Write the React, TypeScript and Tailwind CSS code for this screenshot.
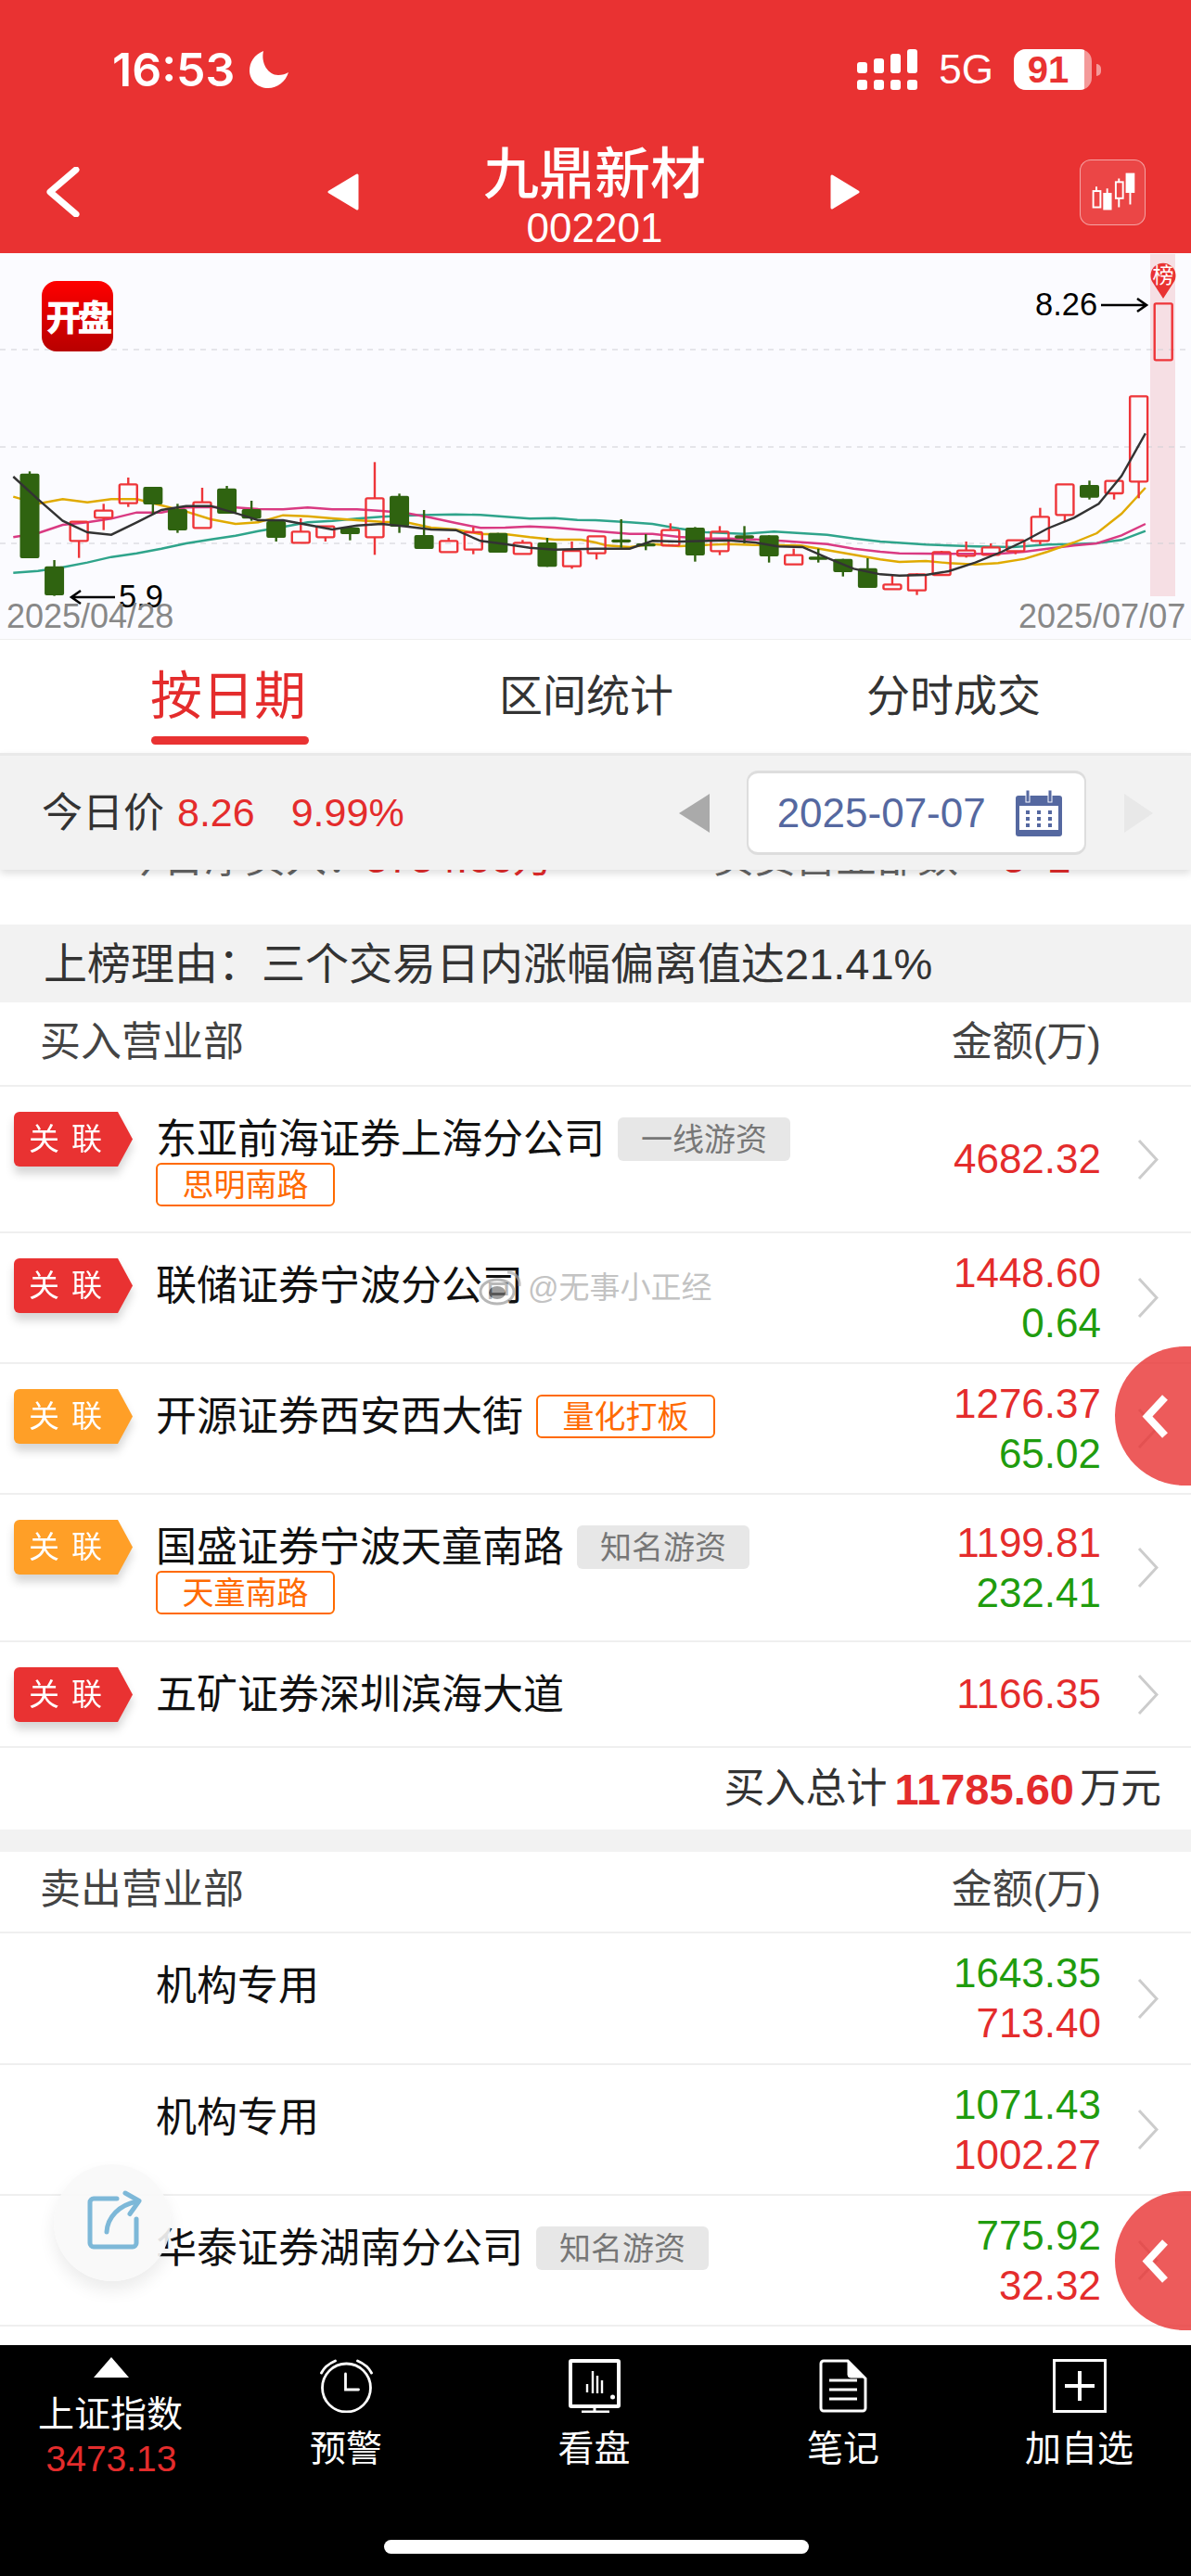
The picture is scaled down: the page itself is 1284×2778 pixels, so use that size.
import React from "react";

type C = [number, number, number, number, number];
// i-order candles: colour (0 green, 1 red), bodyTop, bodyBot, wickTop, wickBot (zoom units)
const candles: C[] = [
  [0,722,996,715,996],[0,1022,1116,1002,1118],[1,878,940,878,995],[1,842,865,820,905],[1,757,818,735,830],
  [0,765,822,765,852],[0,837,906,820,914],[1,815,898,768,898],[0,770,852,762,852],[0,837,868,810,875],
  [0,876,930,876,942],[1,910,946,867,946],[1,893,928,893,942],[0,896,918,896,938],[1,802,928,685,985],
  [0,794,894,787,914],[0,921,966,840,966],[1,940,976,930,976],[1,912,968,895,983],[0,914,978,914,978],
  [1,946,982,937,982],[0,945,1024,930,1024],[1,972,1022,942,1030],[1,925,980,925,1000],[0,935,945,870,962],
  [0,948,958,918,970],[1,905,955,883,955],[0,897,987,895,1007],[1,910,973,892,986],[0,922,932,892,948],
  [0,922,990,922,1010],[1,986,1016,965,1016],[0,991,1001,965,1010],[0,998,1041,998,1055],[0,1028,1092,996,1092],
  [1,1081,1096,1047,1096],[1,1048,1100,1045,1115],[1,976,1050,972,1050],[1,971,988,942,994],[1,961,985,948,985],
  [1,938,973,938,983],[1,862,940,833,952],[1,757,856,757,878],[0,759,800,745,806],[1,746,786,746,806],
  [1,472,748,472,802],[1,172,355,172,355],
];
const lx = (z: number) => z / 2.4422;
const ly = (z: number) => 270 + z / 3;
const pts = (a: number[][], b: number[][]) =>
  [...a.map(([x, y]) => `${lx(x).toFixed(1)},${ly(y).toFixed(1)}`), ...b.map(([x, y]) => `${(642 + lx(x)).toFixed(1)},${ly(y).toFixed(1)}`)].join(" ");

const ma5 = pts(
  [[35,732],[100,805],[165,875],[230,912],[293,920],[360,880],[425,840],[490,827],[555,827],[620,850],[680,873],[745,873],[810,888],[875,903],[940,890],[1005,885],[1070,893],[1135,903],[1200,905],[1265,940],[1330,950],[1395,962],[1460,968],[1568,965]],
  [[90,965],[150,940],[220,942],[350,938],[420,945],[480,958],[545,960],[610,995],[680,1030],[750,1048],[800,1052],[870,1050],[930,1038],[1000,1010],[1070,975],[1130,940],[1190,900],[1260,865],[1325,820],[1385,730],[1448,592]]
);
const ma10 = pts(
  [[35,797],[100,820],[165,805],[230,815],[293,805],[360,805],[425,825],[490,845],[555,870],[620,885],[680,880],[745,857],[810,860],[875,867],[940,873],[1005,878],[1070,880],[1135,897],[1200,903],[1265,918],[1330,918],[1395,928],[1460,936],[1530,936],[1568,945]],
  [[30,955],[90,960],[150,950],[220,957],[290,953],[350,950],[420,953],[540,955],[610,970],[680,985],[750,1000],[800,1008],[870,1005],[930,1012],[1000,1016],[1060,1012],[1130,998],[1190,975],[1260,945],[1320,915],[1385,852],[1448,768]]
);
const ma20 = pts(
  [[35,928],[100,915],[165,888],[230,880],[293,868],[360,848],[425,848],[490,832],[555,830],[620,832],[680,837],[745,838],[810,832],[875,838],[940,838],[1005,843],[1070,850],[1135,865],[1200,882],[1265,898],[1330,897],[1395,893],[1460,897],[1568,908]],
  [[90,917],[150,917],[220,927],[290,932],[350,932],[420,935],[490,940],[610,950],[680,965],[750,975],[800,980],[930,982],[1060,982],[1130,975],[1190,965],[1260,955],[1320,948],[1385,922],[1448,885]]
);
const ma60 = pts(
  [[35,1043],[100,1037],[165,1025],[230,1010],[293,992],[360,980],[425,965],[490,948],[555,935],[620,923],[680,908],[745,895],[810,880],[875,875],[940,868],[1005,862],[1070,858],[1135,856],[1200,854],[1265,856],[1330,862],[1395,868],[1460,866],[1520,872],[1568,873]],
  [[90,880],[150,885],[220,900],[290,912],[390,917],[470,910],[610,920],[680,932],[750,942],[870,952],[1000,958],[1100,960],[1190,952],[1260,950],[1320,947],[1385,937],[1448,908]]
);

function Chart() {
  return (
    <svg viewBox="0 273 1284 417" className="block w-[1284px] h-[417px]">
      <rect x="1240" y="274" width="27" height="369" fill="#f6dfe4" />
      {[377, 482, 586].map((y) => (
        <line key={y} x1="0" x2="1278" y1={y} y2={y} stroke="#cfcfd4" strokeWidth="1" strokeDasharray="6 6" />
      ))}
      <polyline points={ma60} fill="none" stroke="#2fa48b" strokeWidth="2.4" />
      <polyline points={ma20} fill="none" stroke="#d93a82" strokeWidth="2.4" />
      <polyline points={ma10} fill="none" stroke="#e0aa00" strokeWidth="2.4" />
      {candles.map(([red, bt, bb, wt, wb], i) => {
        const x = 32 + i * 26.57;
        const t = ly(bt), b = ly(bb), wT = ly(wt), wB = ly(wb);
        if (red) {
          return (
            <g key={i} stroke="#ee3539" strokeWidth="2.4" fill="none">
              {wT < t && <line x1={x} x2={x} y1={wT} y2={t} />}
              {wB > b && <line x1={x} x2={x} y1={b} y2={wB} />}
              <rect x={x - 9.5} y={t} width="19" height={b - t} rx="1.5" />
            </g>
          );
        }
        return (
          <g key={i}>
            <line x1={x} x2={x} y1={wT} y2={wB} stroke="#2f6310" strokeWidth="2.4" />
            <rect x={x - 10.5} y={t} width="21" height={b - t} rx="2" fill="#2f6310" />
          </g>
        );
      })}
      <polyline points={ma5} fill="none" stroke="#333333" strokeWidth="2.4" />
      <path d="M1254 322 L1243 305 A13.5 13.5 0 1 1 1265 305 Z" fill="#e93232" />
      <text x="1254" y="305" textAnchor="middle" fontSize="23" fill="#fff">榜</text>
      <text x="1116" y="340" fontSize="34.500" fill="#000">8.26</text>
      <path d="M1187 329H1236M1226 322l10 7-10 7" fill="none" stroke="#000" strokeWidth="2.6" />
      <text x="128" y="655" fontSize="34.500" fill="#000">5.9</text>
      <path d="M124 644H77M87 637l-10 7 10 7" fill="none" stroke="#000" strokeWidth="2.6" />
      <text x="7" y="677" fontSize="36" fill="#888">2025/04/28</text>
      <text x="1098" y="677" fontSize="36" fill="#888">2025/07/07</text>
    </svg>
  );
}

function Chevron() {
  return (
    <svg viewBox="0 0 23 45" className="w-[23px] h-[45px] shrink-0">
      <polyline points="2,2 21,22.5 2,43" fill="none" stroke="#cccccc" strokeWidth="3" />
    </svg>
  );
}

function Badge({ kind }: { kind: "red" | "orange" }) {
  return (
    <div className="w-[128px] h-[59px] shrink-0 drop-shadow-[0_8px_5px_rgba(0,0,0,0.16)]">
      <div
        className={
          "w-full h-full rounded-l-[6px] pl-[16px] flex items-center gap-[13px] text-white text-[33px] leading-none [clip-path:polygon(0_0,87.5%_0,100%_50%,87.5%_100%,0_100%)] " +
          (kind === "red" ? "bg-[#e93232]" : "bg-[#ff9f27]")
        }
      >
        <span>关</span>
        <span>联</span>
      </div>
    </div>
  );
}

function GrayTag({ text }: { text: string }) {
  return (
    <span className="inline-flex items-center justify-center w-[186px] h-[47px] ml-[14px] mt-[6px] rounded-[6px] bg-[#e7e7e7] text-[#777777] text-[34px] leading-none">
      {text}
    </span>
  );
}
function OrangeTag({ text, inline }: { text: string; inline?: boolean }) {
  return (
    <span
      className={
        "inline-flex items-center justify-center w-[193px] h-[47px] rounded-[6px] border-2 border-[#ff6a00] text-[#ff6a00] text-[34px] leading-none " +
        (inline ? "ml-[14px] mt-[6px]" : "")
      }
    >
      {text}
    </span>
  );
}

type RowP = {
  h: string;
  badge?: "red" | "orange";
  name: string;
  gray?: string;
  orange?: string;
  inlineOrange?: string;
  a: string;
  b?: string;
  aColor: string;
  bColor?: string;
};
function Row({ h, badge, name, gray, orange, inlineOrange, a, b, aColor, bColor }: RowP) {
  return (
    <div className={"flex items-center border-b-2 border-[#efefef] " + h}>
      <div className="flex-1 self-stretch flex items-start pt-[27px] pl-[15px]">
        {badge ? <Badge kind={badge} /> : <div className="w-[128px] shrink-0" />}
        <div className="ml-[25px]">
          <div className="flex items-start h-[55px]">
            <span className="text-[44px] leading-[59px] text-[#111111] whitespace-nowrap">{name}</span>
            {gray && <GrayTag text={gray} />}
            {inlineOrange && <OrangeTag text={inlineOrange} inline />}
          </div>
          {orange && <OrangeTag text={orange} />}
        </div>
      </div>
      <div className="text-right text-[44px] leading-[54px]">
        <div className={aColor}>{a}</div>
        {b && <div className={bColor}>{b}</div>}
      </div>
      <div className="ml-[39px] mr-[35px]">
        <Chevron />
      </div>
    </div>
  );
}

const R = "text-[#e42c2c]";
const G = "text-[#1f9c0e]";

function Floater({ top }: { top: string }) {
  return (
    <div className={"absolute left-[1202px] w-[82px] h-[150px] rounded-l-full bg-[#e93232]/80 flex items-center pl-[29px] " + top}>
      <svg viewBox="0 0 30 47" className="w-[30px] h-[47px]">
        <polyline points="25,3 6,23.5 25,44" fill="none" stroke="#ffffff" strokeWidth="8" />
      </svg>
    </div>
  );
}

function NavItem({ icon, label }: { icon: React.ReactNode; label: string }) {
  return (
    <div className="flex flex-col items-center pt-[15px]">
      <div className="h-[58px] flex items-center">{icon}</div>
      <div className="mt-[16px] text-[39px] leading-[46px] text-white whitespace-nowrap">{label}</div>
    </div>
  );
}

export default function App() {
  return (
    <div className="relative w-[1284px] h-[2778px] overflow-hidden bg-white flex flex-col font-['Liberation_Sans','Noto_Sans_CJK_SC',sans-serif]">
      {/* header */}
      <header className="h-[273px] shrink-0 bg-[#e93232] text-white flex flex-col">
        <div className="h-[150px] flex items-center pl-[121px]">
          <span className="text-[50px] font-['Inter'] font-semibold leading-none -mt-[1px]">16:53</span>
          <svg viewBox="0 0 42 40" className="ml-[16px] w-[42px] h-[40px]">
            <path d="M15 0C5 4 0 12 0 21c0 11 9 19 20 19 10 0 19-7 22-17-3 2-7 3-11 3C20 26 12 13 15 0Z" fill="#fff" />
          </svg>
          <div className="ml-auto mr-[97px] flex items-center">
            <svg viewBox="925 53 66 44" className="w-[66px] h-[44px]">
              <g fill="#fff">
                <rect x="925" y="67" width="11" height="12" rx="3" />
                <rect x="943" y="63" width="11" height="16" rx="3" />
                <rect x="961" y="58" width="11" height="21" rx="3" />
                <rect x="979" y="53" width="11" height="26" rx="3" />
                <rect x="925" y="86" width="11" height="11" rx="3" />
                <rect x="943" y="86" width="11" height="11" rx="3" />
                <rect x="961" y="86" width="11" height="11" rx="3" />
                <rect x="979" y="86" width="11" height="11" rx="3" />
              </g>
            </svg>
            <span className="ml-[22px] text-[44px] leading-none">5G</span>
            <div className="ml-[22px] w-[84px] h-[44px] rounded-[13px] overflow-hidden bg-white/50">
              <div className="w-[76px] h-[44px] bg-white flex items-center justify-center pr-[2px] text-[40px] font-bold leading-none text-[#e93232]">
                91
              </div>
            </div>
            <div className="ml-[5px] w-[5px] h-[13px] rounded-r-full bg-white/50" />
          </div>
        </div>
        <div className="h-[123px] flex items-center pb-[9px] pl-[49px]">
          <svg viewBox="0 0 37 54" className="w-[37px] h-[54px]">
            <polyline points="33,3 5,27 33,51" fill="none" stroke="#fff" strokeWidth="7" strokeLinecap="round" strokeLinejoin="round" />
          </svg>
          <svg viewBox="0 0 34 40" className="ml-[267px] w-[34px] h-[40px]">
            <path d="M32 2V38L2 20Z" fill="#fff" stroke="#fff" strokeWidth="3" strokeLinejoin="round" />
          </svg>
          <div className="w-[508px] self-start text-center pt-[3px]">
            <div className="h-[71px] text-[60px] font-medium leading-[71px]">九鼎新材</div>
            <div className="h-[44px] text-[44px] leading-[44px]">002201</div>
          </div>
          <svg viewBox="0 0 33 38" className="w-[33px] h-[38px]">
            <path d="M2 2V36L30 19Z" fill="#fff" stroke="#fff" strokeWidth="3" strokeLinejoin="round" />
          </svg>
          <div className="ml-[236px] w-[71px] h-[71px] rounded-[12px] border border-white/50 bg-white/10">
            <svg viewBox="1164 172 71 71" className="w-full h-full">
              <g stroke="#fff" strokeWidth="2" fill="none">
                <path d="M1181.500 201v5M1193.500 203v5M1206.500 192v4M1206.500 214v10M1219 208v13" />
                <rect x="1178" y="206" width="8" height="18" />
                <rect x="1203" y="196" width="8" height="18" />
              </g>
              <rect x="1189" y="208" width="9.500" height="19" fill="#fff" />
              <rect x="1214" y="186" width="10" height="22" fill="#fff" />
            </svg>
          </div>
        </div>
      </header>

      {/* chart */}
      <section className="relative h-[417px] shrink-0 bg-[#fbfbff] border-b border-[#eeeeee]">
        <Chart />
        <div className="absolute left-[45px] top-[30px] w-[77px] h-[76px] rounded-[16px] bg-gradient-to-b from-[#ff0000] to-[#b80000] flex items-center justify-center pt-[4px] text-white text-[38px] font-black leading-none tracking-[-4px]">
          开盘
        </div>
      </section>

      {/* tabs */}
      <div className="h-[122px] shrink-0 grid grid-cols-[492px_280px_512px] bg-white text-[#333333] text-[47px]">
        <div className="flex flex-col items-center">
          <div className="h-[104px] flex items-center pt-[17px] text-[56px] leading-none text-[#e42c2c]">按日期</div>
          <div className="w-[170px] h-[9px] rounded-full bg-[#e93232] translate-x-[2px]" />
        </div>
        <div className="h-[104px] flex items-center justify-center pt-[16px] leading-none">区间统计</div>
        <div className="h-[104px] flex items-center justify-center pt-[16px] leading-none">分时成交</div>
      </div>

      {/* price band */}
      <div className="relative z-10 h-[126px] shrink-0 border-t-[3px] border-[#e9e9e9] bg-[#f2f2f2] shadow-[0_4px_8px_rgba(0,0,0,0.13)] flex items-center pl-[45px]">
        <span className="text-[44px] leading-none text-[#333333]">今日价</span>
        <span className="ml-[14px] text-[43px] leading-none text-[#e42c2c]">8.26</span>
        <span className="ml-[39px] text-[43px] leading-none text-[#e42c2c]">9.99%</span>
        <svg viewBox="0 0 33 42" className="ml-[296px] w-[33px] h-[42px]">
          <path d="M33 0V42L0 21Z" fill="#aaaaaa" />
        </svg>
        <div className="ml-[40px] w-[366px] h-[91px] rounded-[12px] border-2 border-t-[3px] border-b-[3px] border-[#dddddd] bg-white flex items-center pl-[31px]">
          <span className="text-[44px] leading-none text-[#5568a0]">2025-07-07</span>
          <svg viewBox="0 0 50 50" className="ml-[32px] w-[50px] h-[50px]">
            <path d="M3 6h44a3 3 0 0 1 3 3v38a3 3 0 0 1-3 3H3a3 3 0 0 1-3-3V9a3 3 0 0 1 3-3Z" fill="#5568a0" />
            <rect x="4" y="17" width="42" height="26" fill="#ffffff" />
            <rect x="11" y="0" width="4" height="13" fill="#5568a0" stroke="#f9f9ff" strokeWidth="1" />
            <rect x="35" y="0" width="4" height="13" fill="#5568a0" stroke="#f9f9ff" strokeWidth="1" />
            <g fill="#5568a0">
              {[22, 29, 36].map((y) =>
                [11, 23, 35].map((x) => <rect key={`${x}-${y}`} x={x} y={y} width="4" height="4" />)
              )}
            </g>
          </svg>
        </div>
        <svg viewBox="0 0 31 42" className="ml-[41px] w-[31px] h-[42px]">
          <path d="M0 0V42L31 21Z" fill="#e8e8e8" />
        </svg>
      </div>

      {/* peeking row */}
      <div className="h-[59px] shrink-0 overflow-hidden bg-white">
        <div className="-mt-[34px] h-[44px] flex text-[44px] leading-[44px] text-[#666666] whitespace-nowrap">
          <span className="ml-[132px] w-[262px]">今日净买入：</span>
          <span className="w-[375px] text-[#e42c2c]">5754.66万</span>
          <span className="w-[312px]">买卖营业部数</span>
          <span className="text-[#e42c2c]">5&nbsp;&nbsp;2</span>
        </div>
      </div>

      {/* reason */}
      <div className="h-[84px] shrink-0 bg-[#f2f2f2] flex items-center pl-[47px] text-[47px] leading-none text-[#333333] whitespace-nowrap">
        上榜理由：三个交易日内涨幅偏离值达21.41%
      </div>

      {/* buy */}
      <div className="h-[91px] shrink-0 border-b-2 border-[#efefef] flex items-center justify-between pl-[43px] pr-[97px] pb-[3px] text-[44px] leading-none text-[#444444]">
        <span>买入营业部</span>
        <span>金额(万)</span>
      </div>
      <Row h="h-[158px]" badge="red" name="东亚前海证券上海分公司" gray="一线游资" orange="思明南路" a="4682.32" aColor={R} />
      <Row h="h-[141px]" badge="red" name="联储证券宁波分公司" a="1448.60" b="0.64" aColor={R} bColor={G} />
      <Row h="h-[141px]" badge="orange" name="开源证券西安西大街" inlineOrange="量化打板" a="1276.37" b="65.02" aColor={R} bColor={G} />
      <Row h="h-[159px]" badge="orange" name="国盛证券宁波天童南路" gray="知名游资" orange="天童南路" a="1199.81" b="232.41" aColor={R} bColor={G} />
      <Row h="h-[114px]" badge="red" name="五矿证券深圳滨海大道" a="1166.35" aColor={R} />
      <div className="h-[88px] shrink-0 flex items-center justify-end pr-[32px] text-[44px] leading-none text-[#333333]">
        <span>买入总计</span>
        <span className="ml-[8px] mr-[6px] text-[47px] font-bold text-[#e42c2c]">11785.60</span>
        <span>万元</span>
      </div>
      <div className="h-[24px] shrink-0 bg-[#f2f2f2]" />

      {/* sell */}
      <div className="h-[88px] shrink-0 border-b-2 border-[#efefef] flex items-center justify-between pl-[43px] pr-[97px] pb-[4px] text-[44px] leading-none text-[#444444]">
        <span>卖出营业部</span>
        <span>金额(万)</span>
      </div>
      <Row h="h-[142px]" name="机构专用" a="1643.35" b="713.40" aColor={G} bColor={R} />
      <Row h="h-[141px]" name="机构专用" a="1071.43" b="1002.27" aColor={G} bColor={R} />
      <Row h="h-[141px]" name="华泰证券湖南分公司" gray="知名游资" a="775.92" b="32.32" aColor={G} bColor={R} />
      <div className="flex-1" />

      {/* bottom nav */}
      <nav className="h-[249px] shrink-0 bg-black">
        <div className="grid grid-cols-[240px_266px_269px_268px_241px]">
          <div className="flex flex-col items-center pt-[13px]">
            <svg viewBox="0 0 38 22" className="w-[38px] h-[22px]">
              <path d="M19 0L38 22H0Z" fill="#fff" />
            </svg>
            <div className="mt-[17px] text-[39px] leading-[46px] text-white whitespace-nowrap -translate-x-[1px]">上证指数</div>
            <div className="mt-[3px] text-[39px] leading-[44px] text-[#e42c2c]">3473.13</div>
          </div>
          <NavItem
            label="预警"
            icon={
              <svg viewBox="346 2544 57 58" className="w-[57px] h-[58px]" fill="none" stroke="#fff" strokeWidth="2.800" strokeLinecap="round">
                <circle cx="374.500" cy="2575" r="26" />
                <path d="M373.500 2560v17h14" />
                <path d="M347.500 2559c3-6 8-10 15-13M386.500 2546c7 3 12 7 15 13" />
              </svg>
            }
          />
          <NavItem
            label="看盘"
            icon={
              <svg viewBox="614 2544 56 58" className="w-[56px] h-[58px]" fill="none" stroke="#fff">
                <rect x="616" y="2546" width="52" height="49" rx="1" strokeWidth="4" />
                <path d="M642 2595v6M628 2601h30" strokeWidth="3" />
                <path d="M634 2571v9M640 2557v24M645 2562v19M650 2567v14" strokeWidth="2.400" />
                <circle cx="661.500" cy="2585" r="2.500" fill="#fff" stroke="none" />
              </svg>
            }
          />
          <NavItem
            label="笔记"
            icon={
              <svg viewBox="0 0 52 58" className="w-[52px] h-[58px]" fill="none" stroke="#fff">
                <path d="M2 5a3 3 0 0 1 3-3h26l19 19v32a3 3 0 0 1-3 3H5a3 3 0 0 1-3-3Z" strokeWidth="3" />
                <path d="M31 2v15a3 3 0 0 0 3 3h16Z" fill="#fff" strokeWidth="1" />
                <path d="M11 23h30M11 33h30M11 43h30" strokeWidth="3" />
              </svg>
            }
          />
          <NavItem
            label="加自选"
            icon={
              <svg viewBox="0 0 58 58" className="w-[58px] h-[58px]" fill="none" stroke="#fff">
                <rect x="1.500" y="1.500" width="55" height="55" strokeWidth="3" />
                <path d="M13 29h32M29 13v32" strokeWidth="4" />
              </svg>
            }
          />
        </div>
      </nav>

      {/* home indicator */}
      <div className="absolute left-[414px] top-[2739px] w-[458px] h-[15px] rounded-full bg-white" />

      {/* watermark */}
      <div className="absolute left-[516px] top-[1368px] flex items-center text-[33px] leading-none text-[#a8a8a8]/70 [text-shadow:0_0_3px_rgba(255,255,255,0.9)] whitespace-nowrap">
        <svg viewBox="0 0 48 40" className="w-[48px] h-[40px] opacity-70">
          <ellipse cx="20" cy="25" rx="18" ry="13" fill="#ffffff" stroke="#9a9a9a" strokeWidth="3" />
          <ellipse cx="20" cy="26" rx="9" ry="7" fill="#777777" />
          <path d="M31 4c8 0 14 6 13 15" fill="none" stroke="#aaaaaa" strokeWidth="3" />
        </svg>
        <span className="ml-[5px]">@无事小正经</span>
      </div>

      {/* floating */}
      <Floater top="top-[1452px]" />
      <Floater top="top-[2363px]" />
      <div className="absolute left-[58px] top-[2334px] w-[126px] h-[126px] rounded-full bg-[#f8f8f8]/90 shadow-[0_10px_18px_rgba(0,0,0,0.08)]">
        <svg viewBox="58 2334 126 126" className="w-full h-full" fill="none" stroke="#7db8d8" strokeWidth="5" strokeLinecap="round" strokeLinejoin="round">
          <path d="M126 2371H101a4 4 0 0 0-4 4v44a4 4 0 0 0 4 4h42a4 4 0 0 0 4-4v-26" />
          <path d="M115 2407c1-16 13-29 33-33" />
          <path d="M135 2365l15 8.500-10 14" />
        </svg>
      </div>
    </div>
  );
}
